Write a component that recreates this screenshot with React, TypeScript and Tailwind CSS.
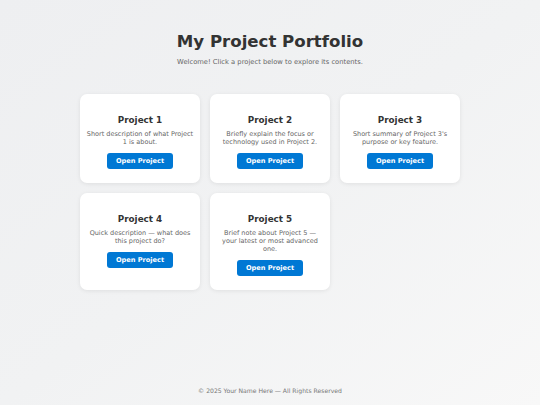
const projects = [
  { title: 'Project 1', desc: 'Short description of what Project 1 is about.' },
  { title: 'Project 2', desc: 'Briefly explain the focus or technology used in Project 2.' },
  { title: 'Project 3', desc: "Short summary of Project 3's purpose or key feature." },
  { title: 'Project 4', desc: 'Quick description — what does this project do?' },
  { title: 'Project 5', desc: 'Brief note about Project 5 — your latest or most advanced one.' },
];

function ProjectCard({ title, desc }: { title: string; desc: string }) {
  return (
    <div className="flex flex-col items-center rounded-[7px] bg-white px-[6px] pt-[21px] pb-[14px] text-center shadow-[0_1px_4px_rgba(0,0,0,0.08)]">
      <h3 className="text-[8.8px] leading-[10px] font-bold text-[#333]">{title}</h3>
      <p className="mt-[5px] text-[6.5px] leading-[8px] text-[#666]">{desc}</p>
      <button
        type="button"
        className="mt-[7px] h-[16px] rounded-[3px] bg-[#0078d4] px-[8.5px] text-[6.6px] leading-[8px] font-bold text-white"
      >
        Open Project
      </button>
    </div>
  );
}

export default function App() {
  return (
    <div
      className="flex h-[405px] w-full flex-col bg-gradient-to-br from-[#eeeff1] via-[#f1f2f3] to-[#f8f8f8]"
      style={{ fontFamily: '"DejaVu Sans", Verdana, sans-serif' }}
    >
      <main className="flex flex-1 flex-col items-center pt-[32px]">
        <h1 className="text-[16.6px] leading-[20px] font-bold text-[#333]">My Project Portfolio</h1>
        <p className="mt-[6px] text-[6.75px] leading-[8px] text-[#666]">
          Welcome! Click a project below to explore its contents.
        </p>
        <div className="mt-[28px] grid grid-cols-[repeat(3,120px)] gap-[10px]">
          {projects.map((p) => (
            <ProjectCard key={p.title} title={p.title} desc={p.desc} />
          ))}
        </div>
      </main>
      <footer className="pb-[10px] text-center text-[6.1px] leading-[8px] text-[#777]">
        © 2025 Your Name Here — All Rights Reserved
      </footer>
    </div>
  );
}
